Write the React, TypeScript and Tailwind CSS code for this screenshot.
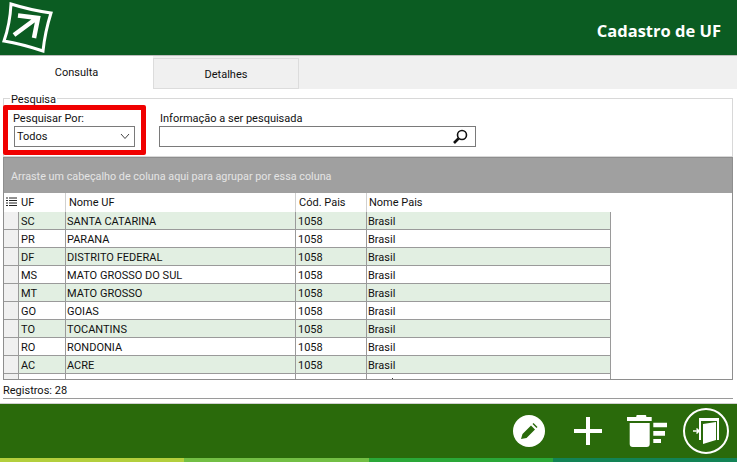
const rows = [
  ['SC', 'SANTA CATARINA'],
  ['PR', 'PARANA'],
  ['DF', 'DISTRITO FEDERAL'],
  ['MS', 'MATO GROSSO DO SUL'],
  ['MT', 'MATO GROSSO'],
  ['GO', 'GOIAS'],
  ['TO', 'TOCANTINS'],
  ['RO', 'RONDONIA'],
  ['AC', 'ACRE'],
];

const Logo = () => (
  <svg width="55" height="55" viewBox="0 0 55 55">
    <path d="M11 4 Q30 10 51 13 Q45 32 43 51 Q22 44 4 41 Q10 24 11 4Z" fill="none" stroke="#fff" strokeWidth="3" />
    <path d="M18 15.5 L38 18 L34 38 M14 35 L37 18" fill="none" stroke="#fff" strokeWidth="4.5" />
  </svg>
);

const Footer = () => (
  <div className="h-[58px] shrink-0 flex flex-col">
    <div className="h-[54px] bg-[#2a6a0b] flex items-center justify-end pr-[7px]">
      <svg width="34" height="34" viewBox="0 0 34 34" className="mr-[27px]">
        <circle cx="17" cy="17" r="16" fill="#fff" />
        <path d="M9 25 L10.5 20 L19 11.5 L23 15.5 L14.5 24Z M20.5 10 L21.5 9 L25.5 13 L24.5 14Z" fill="#2a6a0b" />
      </svg>
      <svg width="30" height="30" viewBox="0 0 30 30" className="mr-[24px]">
        <path d="M13 1h4v12h12v4H17v12h-4V17H1v-4h12z" fill="#fff" />
      </svg>
      <svg width="40" height="32" viewBox="0 0 40 32" className="mr-[15px]">
        <path d="M0 2h9.300v-1q0-1 1-1h8q1 0 1 1v1H24.700v4H0z M2.700 8h20v21q0 3-3 3h-14q-3 0-3-3z M26.300 7.700H40v4.600H26.300z M26.300 16H38v4.700H26.300z M26.300 24H34v4H26.300z" fill="#fff" />
      </svg>
      <svg width="48" height="48" viewBox="0 0 48 48">
        <circle cx="24" cy="24" r="22" fill="none" stroke="#fff" strokeWidth="2" />
        <path d="M17 11h20v22h-2V14H19v19h-2z" fill="#fff" />
        <path d="M21 17L34 15V33L21 37Z" fill="#fff" />
        <path d="M11 24h6M14.500 21.500l2.500 2.500-2.500 2.500" fill="none" stroke="#fff" strokeWidth="1.500" />
      </svg>
    </div>
    <div className="h-1 grid grid-cols-4">
      <div className="bg-[#b3cf3c]" />
      <div className="bg-[#72bf44]" />
      <div className="bg-[#2aa838]" />
      <div className="bg-[#128356]" />
    </div>
  </div>
);

export default function App() {
  return (
    <div className="w-[737px] h-[462px] overflow-hidden flex flex-col bg-white text-[11px] leading-[14px] text-[#111] font-['Roboto',sans-serif]">
      <div className="h-[55px] shrink-0 bg-[#0b5c22] flex items-center justify-between pr-4">
        <Logo />
        <span className="pt-[6px] text-white text-[16.500px] font-bold font-['Open_Sans',sans-serif]">Cadastro de UF</span>
      </div>
      <div className="h-[34px] shrink-0 flex border-t border-[#bdbdbd] bg-[#f0f0f0]">
        <div className="w-[153px] bg-white flex justify-center pt-[10px]">Consulta</div>
        <div className="w-[146px] mt-[2px] bg-[#f0f0f0] border border-[#dcdcdc] flex justify-center pt-[9px]">Detalhes</div>
      </div>

      <div className="flex-1 min-h-0 flex flex-col pl-[3px] pr-[4px]">
        <div className="h-[59px] shrink-0 mt-[9px] border border-[#d8d8d8] relative flex items-start pl-[10px] pt-[13px] gap-[24px]">
          <span className="absolute left-[6px] -top-[6px] bg-white px-px">Pesquisa</span>
          <div className="absolute -left-px top-[6px] w-[143px] h-[50px] border-[5px] border-[#f00000] rounded-[2px]" />
          <div className="w-[121px] flex flex-col relative">
            <span className="-ml-px">Pesquisar Por:</span>
            <div className="h-[21px] border border-[#7a7a7a] flex items-center justify-between pl-[2px] pr-[4px]">
              <span>Todos</span>
              <svg width="10" height="7" viewBox="0 0 10 7">
                <path d="M1 1 L5 5.500 L9 1" fill="none" stroke="#444" strokeWidth="1" />
              </svg>
            </div>
          </div>
          <div className="w-[317px] flex flex-col relative">
            <span className="ml-px">Informação a ser pesquisada</span>
            <div className="h-[21px] border border-[#7a7a7a] flex items-center justify-end pr-[7px]">
              <svg width="16" height="16" viewBox="0 0 16 16">
                <circle cx="10" cy="6" r="4.500" fill="none" stroke="#111" strokeWidth="1.600" />
                <path d="M6.500 9.500 L2 14" stroke="#111" strokeWidth="2.600" />
              </svg>
            </div>
          </div>
        </div>

        <div className="h-[223px] shrink-0 border border-[#8e8e8e] flex flex-col overflow-hidden">
          <div className="h-[35px] shrink-0 bg-[#a0a0a0] text-[#e4e4e4] text-[10.800px] flex items-center pl-[7px] pt-[3px]">
            Arraste um cabeçalho de coluna aqui para agrupar por essa coluna
          </div>
          <div className="h-[19px] shrink-0 flex items-center">
            <div className="w-[15px] flex justify-center">
              <svg width="11" height="11" viewBox="0 0 11 11">
                <path d="M0 1h2M3 1h8M0 3.500h2M3 3.500h8M0 6h2M3 6h8M0 8.500h2M3 8.500h8" stroke="#222" strokeWidth="1" />
              </svg>
            </div>
            <div className="w-[46px] pl-[2px] h-full flex items-center">UF</div>
            <div className="w-[230px] pl-[3px] h-full border-l border-[#d0d0d0] flex items-center">Nome UF</div>
            <div className="w-[71px] pl-[3px] h-full border-l border-[#d0d0d0] flex items-center">Cód. Pais</div>
            <div className="w-[244px] pl-[2px] h-full border-l border-[#d0d0d0] flex items-center">Nome Pais</div>
          </div>
          {rows.map((r, i) => (
            <div key={r[0]} className={`h-[18px] shrink-0 flex w-[607px] border-b border-r border-[#9a9a9a] ${i % 2 === 0 ? 'bg-[#e2efe2]' : 'bg-white'}`}>
              <div className="w-[15px] shrink-0 bg-[#f0f0f0] border-r border-[#9a9a9a]" />
              <div className="w-[47px] shrink-0 pl-[2px] pt-[2px] border-r border-[#9a9a9a] flex items-center">{r[0]}</div>
              <div className="w-[230px] shrink-0 pl-px pt-[2px] border-r border-[#9a9a9a] flex items-center">{r[1]}</div>
              <div className="w-[71px] shrink-0 pl-[2px] pt-[2px] border-r border-[#9a9a9a] flex items-center">1058</div>
              <div className="flex-1 pl-px pt-[2px] flex items-center">Brasil</div>
            </div>
          ))}
          <div className="h-[18px] shrink-0 flex w-[607px] border-r border-[#9a9a9a]">
            <div className="w-[15px] shrink-0 bg-[#f0f0f0] border-r border-[#9a9a9a]" />
            <div className="w-[47px] shrink-0 border-r border-[#9a9a9a]" />
            <div className="w-[230px] shrink-0 border-r border-[#9a9a9a]" />
            <div className="w-[71px] shrink-0 border-r border-[#9a9a9a]" />
            <div className="flex-1 flex items-start">
              <div className="w-px h-px ml-[25px] mt-[4px] bg-[#333]" />
            </div>
          </div>
        </div>
        <div className="h-[19px] shrink-0 border-b border-[#9a9a9a] flex items-center pt-[3px]">Registros: 28</div>
      </div>
      <div className="h-[5px] shrink-0 border-b border-[#d0d0d0]" />
      <Footer />
    </div>
  );
}
